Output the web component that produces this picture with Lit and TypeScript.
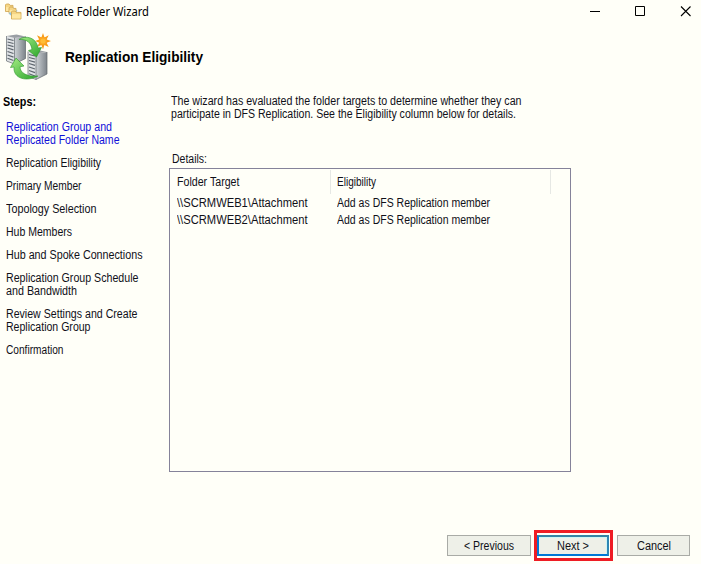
import { LitElement, html, css, svg } from "lit";
import { customElement, property } from "lit/decorators.js";

/** One line of text, condensed or widened so that it fills a given width. */
@customElement("fit-line")
class FitLine extends LitElement {
  @property({ type: Number }) width = 0;
  @property() text = "";
  static styles = css`
    :host { display: block; white-space: pre; }
    span { display: inline-block; transform-origin: 0 50%; }
  `;
  render() {
    return html`<span>${this.text}</span>`;
  }
  updated() {
    const s = this.renderRoot.querySelector("span") as HTMLElement;
    s.style.transform = "none";
    const natural = s.getBoundingClientRect().width;
    s.style.transform = `scaleX(${this.width / natural})`;
    this.style.width = `${this.width}px`;
  }
}

type Line = [string, number];
const steps: Line[][] = [
  [["Replication Group and", 106], ["Replicated Folder Name", 113.5]],
  [["Replication Eligibility", 95]],
  [["Primary Member", 75.5]],
  [["Topology Selection", 90.5]],
  [["Hub Members", 66]],
  [["Hub and Spoke Connections", 136.5]],
  [["Replication Group Schedule", 132.5], ["and Bandwidth", 71]],
  [["Review Settings and Create", 131.5], ["Replication Group", 84.5]],
  [["Confirmation", 57.5]],
];
const rows: Line[][] = [
  [["\\\\SCRMWEB1\\Attachment", 130.5], ["Add as DFS Replication member", 153]],
  [["\\\\SCRMWEB2\\Attachment", 130.5], ["Add as DFS Replication member", 153]],
];

const line = ([t, w]: Line) => html`<fit-line .text=${t} .width=${w}></fit-line>`;

const folder = (x: number, y: number, w: number, h: number) => svg`
  <g transform="translate(${x} ${y})">
    <path d="M.5 ${h}V1.3L1.3 .5H4L5.2 1.9H${w}V${h}Z" fill="#f6d684" stroke="#cfa44e" stroke-width=".8"/>
    <path d="M1 3.6H${w - 0.5}V${h - 0.5}H1Z" fill="#ffe8a2"/>
  </g>`;

const tower = (x: number, y: number) => svg`
  <g transform="translate(${x} ${y})">
    <path d="M0 1.5L8 3.5V29.5L0 26.5Z" fill="#dfe2e5"/>
    <path d="M8 3.5L19 2V24L8 29.5Z" fill="url(#side)"/>
    <path d="M0 1.5L10 0L19 2L8 3.5Z" fill="#9a9fa4"/>
    <path d="M1 4.5L7 6M1 7.5L7 9M1 10.5L7 12.2M1 13.5L7 15.4M1 17L7 19M1 20.5L7 22.6M1 23.8L7 26" stroke="#5d656d" stroke-width="1.2"/>
    <path d="M8 3.5V29.5L0 26.5V1.5M19 2V24L8 29.5" fill="none" stroke="#62696f" stroke-width=".7"/>
  </g>`;

@customElement("app-root")
class AppRoot extends LitElement {
  static styles = css`
    :host {
      display: flex; flex-direction: column; box-sizing: border-box;
      width: 701px; height: 564px; overflow: hidden; background: #fffff8;
      color: #101018; font: 12px/13px "Liberation Sans", Arial, sans-serif;
    }
    svg { display: block; flex: none; }
    .titlebar { display: flex; height: 24px; padding-left: 4px; align-items: center; }
    .caption { margin-left: 4px; font: 12px/16px "Noto Sans", "Open Sans", sans-serif; flex: 1; color: #000; }
    .banner { display: flex; height: 66px; align-items: center; padding-left: 5px; }
    .heading { margin-left: 8px; font-weight: bold; font-size: 14px; line-height: 18px; color: #000; }
    .body { display: flex; height: 382px; }
    .steps { width: 163px; padding: 5px 0 0 6px; display: flex; flex-direction: column; gap: 10px; }
    .label { font-weight: bold; margin: 0 0 2px -3px; padding-top: 1px; color: #000; }
    .done { color: #1010d8; }
    .main { width: 402px; }
    .intro { padding: 5px 0 0 2px; height: 58px; box-sizing: border-box; }
    .details { height: 20px; padding-left: 3px; box-sizing: border-box; line-height: 22px; }
    .list { box-sizing: border-box; width: 402px; height: 304px; border: 1px solid #85839a; padding-top: 1px; }
    .head, .row { display: grid; grid-template-columns: 161px 220px; }
    .head { height: 24px; line-height: 25px; margin-bottom: 1px; }
    .head > * { height: 24px; border-right: 1px solid #e6e8e4; }
    .head > *, .row > * { box-sizing: border-box; padding-left: 7px; }
    .head > :last-child, .row > :last-child { padding-left: 6px; }
    .row { height: 17px; line-height: 17px; }
    .footer { display: flex; margin-top: 58px; padding-left: 447px; align-items: center; height: 31px; }
    .btn {
      box-sizing: border-box; height: 21px; border: 1px solid #a9aba6; background: #eef0e8;
      display: flex; align-items: center; justify-content: center; padding-top: 1px;
    }
    .prev { width: 84px; }
    .ring { box-sizing: border-box; width: 79px; height: 31px; margin: 0 4px 0 3px; border: 3px solid #ee1c24; display: flex; align-items: center; }
    .next { width: 72px; border: 2px solid #0078d7; border-top-color: #3583a4; border-right-color: #2f86b4; box-shadow: inset 0 1px #cdf5f5, inset -1px 0 #cdf5f5; }
    .cancel { width: 73px; }
  `;

  render() {
    return html`
      <div class="titlebar">
        <svg width="18" height="20" viewBox="0 0 18 20">
          ${folder(1, 1.5, 8, 8)}
          <path d="M5 7.5L9.5 6L13.5 8.5L11 12L7 13.5L5 11Z" fill="#a8d4ee"/>
          ${folder(4.5, 4.5, 7.5, 7)}
          <path d="M5 10.5H8V14L5.5 12.5Z" fill="#8fc6ea"/>
          ${folder(7, 8.5, 10, 8.5)}
        </svg>
        <div class="caption">${line(["Replicate Folder Wizard", 123])}</div>
        <svg width="113" height="24" viewBox="0 0 113 24" fill="none" stroke="#000">
          <path d="M2 11.5H12M47.5 6.5H56.5V15.5H47.5Z"/>
          <path d="M93 6.5L102.5 16M102.5 6.5L93 16" stroke-width="1.1"/>
        </svg>
      </div>
      <div class="banner">
        <svg width="52" height="52" viewBox="5 31 52 52">
          <defs>
            <linearGradient id="side" x2="1"><stop stop-color="#ccd1d5"/><stop offset="1" stop-color="#7d848a"/></linearGradient>
            <linearGradient id="leaf" x2="1" y2="1"><stop stop-color="#a5ec85"/><stop offset="1" stop-color="#2aa52a"/></linearGradient>
          </defs>
          ${tower(6.5, 34.5)}${tower(28, 50)}
          <path d="M43 33L44.5 37.6L48.7 35.3L46.6 39.5L51 41L46.6 42.7L48.7 47L44.4 45L43 49.4L41.4 45L37 47L39.2 42.7L35 41L39.2 39.4L37 35.2L41.4 37.5Z" fill="#f99b16"/>
          <circle cx="43" cy="41" r="4" fill="#fba521"/>
          <circle cx="43" cy="41" r="2.6" fill="#ffbd35"/>
          <path d="M19 39.5C26 34.5 37 38 38 48L41.5 47.5L36.5 57L28.5 50.5L32 49.5C31 42.5 27 39 19 39.5Z" fill="url(#leaf)" stroke="#2b962c" stroke-width=".6"/>
          <path d="M38 76C27 82 13 79 14 67L10.5 67.5L16 58L24 66L20 66.8C20 73 27 77 38 76Z" fill="url(#leaf)" stroke="#2b962c" stroke-width=".6"/>
        </svg>
        <div class="heading">${line(["Replication Eligibility", 138])}</div>
      </div>
      <div class="body">
        <div class="steps">
          <div class="label">${line(["Steps:", 33])}</div>
          ${steps.map((s, i) => html`<div class=${i === 0 ? "done" : "step"}>${s.map(line)}</div>`)}
        </div>
        <div class="main">
          <div class="intro">
            ${line(["The wizard has evaluated the folder targets to determine whether they can", 350.5])}
            ${line(["participate in DFS Replication. See the Eligibility column below for details.", 345])}
          </div>
          <div class="details">${line(["Details:", 35])}</div>
          <div class="list">
            <div class="head">
              <div>${line(["Folder Target", 62.5])}</div>
              <div>${line(["Eligibility", 39])}</div>
            </div>
            ${rows.map((r) => html`<div class="row">${r.map((c) => html`<div>${line(c)}</div>`)}</div>`)}
          </div>
        </div>
      </div>
      <div class="footer">
        <div class="btn prev">${line(["< Previous", 50])}</div>
        <div class="ring"><div class="btn next">${line(["Next >", 32])}</div></div>
        <div class="btn cancel">${line(["Cancel", 34])}</div>
      </div>
    `;
  }
}
